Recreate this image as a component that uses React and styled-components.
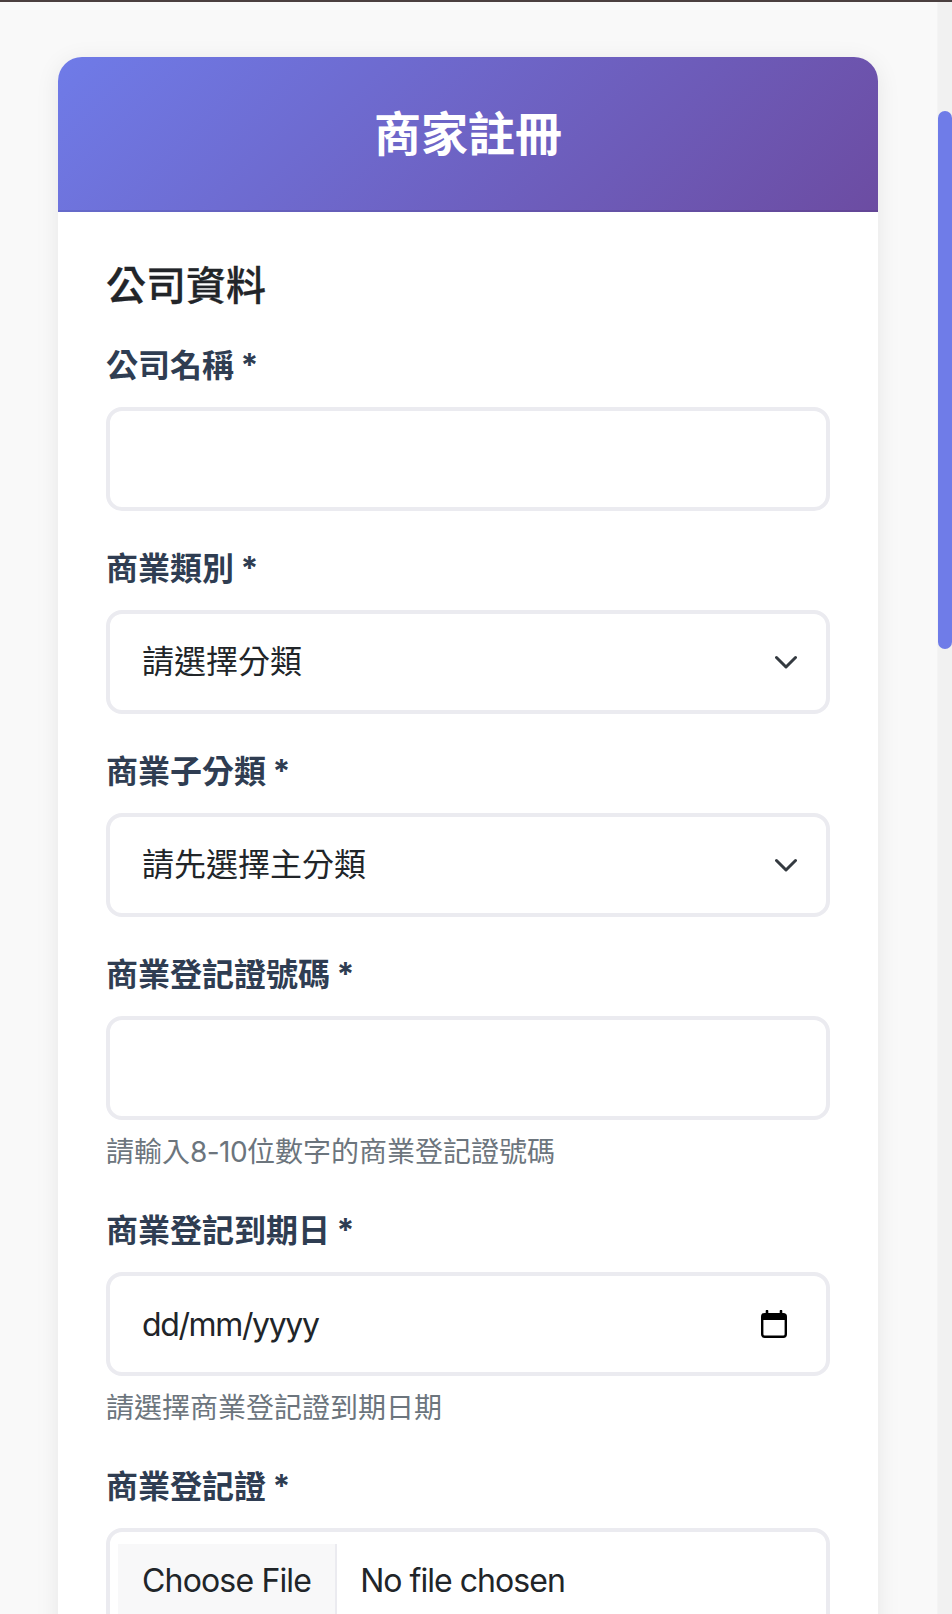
import React from "react";
import styled, { createGlobalStyle } from "styled-components";

const FONT = `Inter, "Noto Sans CJK TC", "Noto Sans CJK SC", sans-serif`;

const Global = createGlobalStyle`
  * { box-sizing: border-box; }
  html, body {
    margin: 0;
    height: 1614px;
    overflow: hidden;
    background: #f9f9f9;
    font-family: ${FONT};
  }
`;

const Frame = styled.div`
  height: 1614px;
  display: flex;
  flex-direction: column;
  overflow: hidden;
`;

const TopLine = styled.div`
  height: 2px;
  flex: none;
  background: #4a3f3f;
`;

const Viewport = styled.div`
  flex: 1;
  min-height: 0;
  display: flex;
`;

const Main = styled.main`
  flex: 1;
  min-width: 0;
  padding: 55px 60px 0 58px;
  overflow: hidden;
`;

const Track = styled.div`
  flex: none;
  width: 14px;
  background: #f1f1f1;
  padding-top: 109px;
  box-shadow: -1px 0 0 #f4f4f4;
`;

const Thumb = styled.div`
  height: 538px;
  border-radius: 8px;
  background: #6f7ce8;
`;

const Card = styled.div`
  background: #fff;
  border-radius: 24px 24px 0 0;
  box-shadow: 0 4px 24px rgba(0, 0, 0, 0.08);
  min-height: 1700px;
`;

const Header = styled.header`
  height: 155px;
  border-radius: 24px 24px 0 0;
  background: linear-gradient(135deg, #6f7be8 0%, #6c4ca2 100%);
  box-shadow: inset 0 -2px 0 rgba(0, 0, 0, 0.08);
  display: flex;
  align-items: center;
  justify-content: center;
`;

const Title = styled.h1`
  margin: 0;
  color: #fff;
  font-size: 47px;
  font-weight: 700;
  line-height: 1.2;
`;

const Body = styled.form`
  padding: 46px 48px 0;
`;

const SectionTitle = styled.h2`
  margin: 0 0 34px;
  color: #222529;
  font-size: 40px;
  font-weight: 500;
  line-height: 56px;
  -webkit-text-stroke: 0.3px #222529;
`;

const Field = styled.div`
  margin-bottom: 40px;
`;

const Label = styled.label`
  display: block;
  margin-bottom: 23px;
  color: #2f3d52;
  font-size: 32px;
  font-weight: 700;
  line-height: 36px;
  word-spacing: -1px;
`;

const boxStyles = `
  display: flex;
  align-items: center;
  width: 100%;
  height: 104px;
  border: 4px solid #ebebf0;
  border-radius: 16px;
  background: #fff;
  color: #212529;
  font-family: ${FONT};
  font-size: 32px;
`;

const TextInput = styled.input`
  ${boxStyles}
  padding: 0 32px;
  outline: none;
`;

const SelectBox = styled.div`
  ${boxStyles}
  justify-content: space-between;
  padding: 0 29px 0 32px;
`;

const SelectText = styled.span`
  margin-bottom: 6px;
`;

const DateBox = styled.div`
  ${boxStyles}
  justify-content: space-between;
  padding: 0 38px 0 32px;
  letter-spacing: -0.043em;
`;

const FileBox = styled.div`
  ${boxStyles}
  padding: 12px 8px;
  letter-spacing: -0.03em;
`;

const FileButton = styled.button`
  align-self: stretch;
  display: flex;
  align-items: center;
  margin: 0 23px 0 0;
  padding: 0 24px;
  border: 0;
  border-right: 2px solid #ebebf0;
  background: #f8f8f9;
  color: #212529;
  font-family: ${FONT};
  font-size: 32px;
  letter-spacing: -0.026em;
`;

const Help = styled.small`
  display: block;
  margin-top: 11px;
  margin-bottom: 1px;
  color: #6c757d;
  font-size: 28px;
  line-height: 42px;
`;

const Digits = styled.span`
  letter-spacing: -0.02em;
`;

const Chevron = () => (
  <svg width="22" height="24" viewBox="0 0 22 24" fill="none" stroke="#343a40" strokeWidth="3" strokeLinecap="round" strokeLinejoin="round">
    <path d="M1.5 7.5 11 17l9.5-9.5" />
  </svg>
);

const CalendarIcon = () => (
  <svg width="28" height="28" viewBox="0 0 28 28" fill="none">
    <path d="M7 1v4M21 1v4" stroke="#000" strokeWidth="2.6" strokeLinecap="round" />
    <rect x="2.2" y="4.2" width="23.6" height="22.6" rx="2.5" stroke="#000" strokeWidth="2.4" />
    <rect x="2" y="4" width="24" height="6" fill="#000" />
  </svg>
);

export default function App() {
  return (
    <Frame>
      <Global />
      <TopLine />
      <Viewport>
        <Main>
          <Card>
            <Header>
              <Title>商家註冊</Title>
            </Header>
            <Body>
              <SectionTitle>公司資料</SectionTitle>
              <Field>
                <Label>公司名稱 *</Label>
                <TextInput type="text" />
              </Field>
              <Field>
                <Label>商業類別 *</Label>
                <SelectBox><SelectText>請選擇分類</SelectText><Chevron /></SelectBox>
              </Field>
              <Field>
                <Label>商業子分類 *</Label>
                <SelectBox><SelectText>請先選擇主分類</SelectText><Chevron /></SelectBox>
              </Field>
              <Field>
                <Label>商業登記證號碼 *</Label>
                <TextInput type="text" />
                <Help>請輸入<Digits>8-10</Digits>位數字的商業登記證號碼</Help>
              </Field>
              <Field>
                <Label>商業登記到期日 *</Label>
                <DateBox>dd/mm/yyyy<CalendarIcon /></DateBox>
                <Help>請選擇商業登記證到期日期</Help>
              </Field>
              <Field>
                <Label>商業登記證 *</Label>
                <FileBox>
                  <FileButton type="button">Choose File</FileButton>
                  No file chosen
                </FileBox>
              </Field>
            </Body>
          </Card>
        </Main>
        <Track>
          <Thumb />
        </Track>
      </Viewport>
    </Frame>
  );
}
